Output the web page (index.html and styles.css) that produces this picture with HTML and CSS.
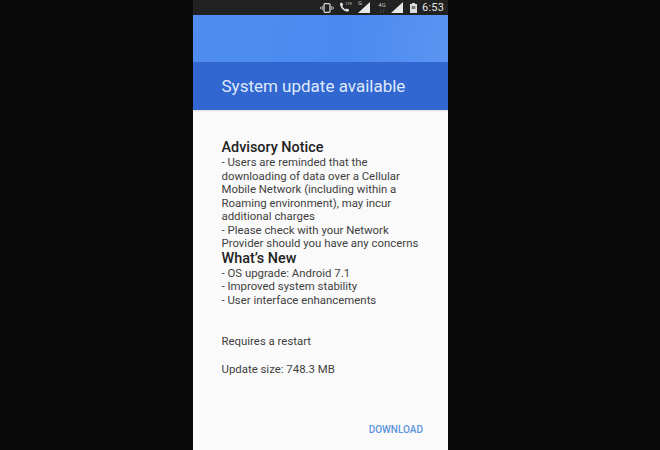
FILE: index.html
```html
<!DOCTYPE html>
<html lang="en">
<head>
    <meta charset="UTF-8">
    <title>System update</title>
    <link rel="stylesheet" href="styles.css">
</head>
<body>
    <div class="phone">
        <div class="status-bar">
            <!-- vibrate -->
            <svg class="icon-vibrate" width="14" height="10" viewBox="0 0 14 10">
                <rect x="4" y="0.7" width="6" height="8.6" rx="1" fill="none" stroke="#d4d4d4" stroke-width="1.3"/>
                <path d="M2.2 3v4M0.6 4v2M11.8 3v4M13.4 4v2" stroke="#bdbdbd" stroke-width="1"/>
            </svg>
            <!-- call + LTE -->
            <span class="call">
                <svg width="12" height="11" viewBox="0 0 12 11">
                    <path d="M1 1.2L3 .6l1.2 2.4-1 1c.7 1.5 1.7 2.6 3.300 3.400l1-1 2.500 1.100-.5 2C5.500 10 1 6 1 1.200z" fill="#e6e6e6"/>
                </svg>
                <span class="tiny lte">LTE</span>
            </span>
            <!-- sim 1 signal -->
            <span class="signal">
                <span class="tiny sim">G</span>
                <svg width="12" height="11" viewBox="0 0 12 11"><path d="M0 11L12 0v11z" fill="#e8e8e8"/></svg>
            </span>
            <!-- sim 2 signal -->
            <span class="net">
                <span class="tiny">4G</span>
                <span class="tiny arrows">↓↑</span>
            </span>
            <svg class="signal-two" width="12" height="11" viewBox="0 0 12 11"><path d="M0 11L12 0v11z" fill="#e8e8e8"/></svg>
            <!-- battery -->
            <svg class="battery" width="7" height="10" viewBox="0 0 7 10">
                <path d="M2 0h3v1h2v9H0V1h2z" fill="#dedede"/>
                <rect x="1.700" y="3" width="3.600" height="3" fill="#777"/>
            </svg>
            <span class="clock">6:53</span>
        </div>
        <div class="header-top"></div>
        <div class="header-title">System update available</div>
        <div class="content">
            <div class="notes">
                <h2>Advisory Notice</h2>
                <p>- Users are reminded that the<br>downloading of data over a Cellular<br>Mobile Network (including within a<br>Roaming environment), may incur<br>additional charges<br>- Please check with your Network<br>Provider should you have any concerns</p>
                <h2>What’s New</h2>
                <p>- OS upgrade: Android 7.1<br>- Improved system stability<br>- User interface enhancements</p>
            </div>
            <p class="restart">Requires a restart</p>
            <p class="size">Update size: 748.3 MB</p>
            <div class="actions">
                <span class="download">DOWNLOAD</span>
            </div>
        </div>
    </div>
</body>
</html>
```

FILE: styles.css
```css
* {
    margin: 0;
    padding: 0;
    box-sizing: border-box;
}

html,
body {
    height: 100%;
    overflow: hidden;
}

body {
    background: #0a0a0a;
    font-family: 'Roboto', 'Liberation Sans', sans-serif;
    padding-left: 193px;
}

.phone {
    width: 255px;
    height: 450px;
    background: #fafafa;
    display: flex;
    flex-direction: column;
}

.status-bar {
    height: 15px;
    flex: none;
    background: #212121;
    color: #e4e4e4;
    display: flex;
    align-items: center;
    justify-content: flex-end;
    padding-right: 5px;
}

.icon-vibrate {
    margin-right: 5px;
}

.call {
    display: flex;
    position: relative;
    width: 12px;
    margin-right: 7px;
}

.tiny {
    font-size: 6px;
    line-height: 6px;
    color: #c4c4c4;
}

.lte {
    font-size: 4px;
    line-height: 5px;
    position: absolute;
    top: -1px;
    right: -1px;
}

.signal {
    position: relative;
    display: flex;
    margin-right: 7px;
}

.sim {
    position: absolute;
    top: -2px;
    left: 0;
}

.net {
    display: flex;
    flex-direction: column;
    align-items: center;
    width: 10px;
    margin-right: 4px;
}

.arrows {
    color: #777;
}

.signal-two {
    margin-right: 7px;
}

.battery {
    margin-right: 5px;
}

.clock {
    font-size: 11px;
    line-height: 15px;
    width: 21px;
    letter-spacing: 0.2px;
}

.header-top {
    height: 47px;
    flex: none;
    background: linear-gradient(100deg, #4f8ef0, #4a8aef 60%, #5b95f3);
}

.header-title {
    height: 48px;
    flex: none;
    background: #3266d0;
    color: #dfeafc;
    font-size: 17px;
    line-height: 49px;
    padding-left: 28.500px;
    box-shadow: 0 1px 2px rgba(0, 0, 0, 0.12);
}

.content {
    flex: 1;
    padding: 30px 25px 0 28.500px;
    color: #3f3f3f;
    font-size: 11.4px;
    line-height: 13.5px;
}

h2 {
    font-size: 14.4px;
    font-weight: 500;
    line-height: 16px;
    color: #222;
}

.restart {
    margin-top: 28px;
}

.size {
    margin-top: 14.5px;
}

.actions {
    display: flex;
    justify-content: flex-end;
    margin-top: 46.5px;
}

.download {
    color: #5b95e0;
    font-size: 10px;
    font-weight: 500;
}
```
